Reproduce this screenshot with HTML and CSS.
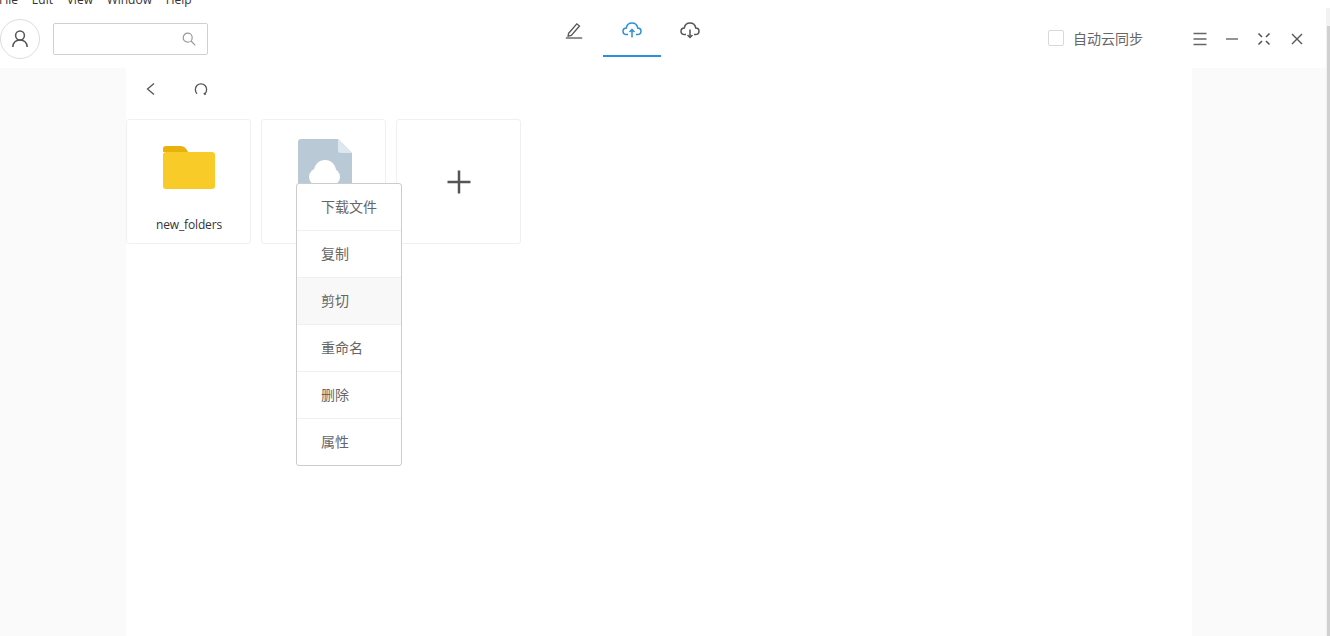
FILE: index.html
```html
<!DOCTYPE html>
<html lang="zh-CN">
<head>
<meta charset="utf-8">
<title>云同步</title>
<link rel="stylesheet" href="styles.css">
</head>
<body>
<div class="app">
  <nav class="menubar">
    <span>File</span><span>Edit</span><span>View</span><span>Window</span><span>Help</span>
  </nav>
  <header class="header">
    <div class="head-left">
      <div class="avatar">
        <svg width="20" height="20" viewBox="0 0 20 20" fill="none" stroke="#555" stroke-width="1.5"><circle cx="10" cy="6.500" r="4.400"/><path d="M2.800 18c.4-4.500 3-7 7.200-7s6.800 2.500 7.200 7"/></svg>
      </div>
      <div class="search">
        <svg width="14" height="14" viewBox="0 0 14 14" fill="none" stroke="#999" stroke-width="1.200"><circle cx="5.700" cy="5.700" r="4.500"/><path d="M9 9l4.300 4.300"/></svg>
      </div>
    </div>
    <div class="tabs">
      <div class="tab">
        <svg width="18" height="18" viewBox="0 0 18 18" fill="none" stroke="#555" stroke-width="1.300"><path d="M3.500 12.500L11.800 2.800l2.700 2.200-8.200 9.400-3.200.8z"/><path d="M.8 17h16.400"/></svg>
      </div>
      <div class="tab tab-active">
        <svg width="20" height="18" viewBox="0 0 20 18" fill="none" stroke="#2b8fdc" stroke-width="1.500"><path d="M6 13.500H4.700C2.500 13.500 1 12 1 10.200c0-1.900 1.500-3.300 3.300-3.300C4.800 4 7 2 10 2s5.200 2 5.700 4.900c1.800 0 3.300 1.400 3.300 3.300 0 1.800-1.500 3.300-3.700 3.300H14"/><path d="M10 16.500V8.500M7.500 11L10 8.500l2.500 2.500"/></svg>
      </div>
      <div class="tab">
        <svg width="20" height="18" viewBox="0 0 20 18" fill="none" stroke="#555" stroke-width="1.500"><path d="M6 13.500H4.700C2.500 13.500 1 12 1 10.200c0-1.900 1.500-3.300 3.300-3.300C4.800 4 7 2 10 2s5.200 2 5.700 4.900c1.800 0 3.300 1.400 3.300 3.300 0 1.800-1.500 3.300-3.700 3.300H14"/><path d="M10 8.500v8M7.500 14l2.500 2.500 2.500-2.500"/></svg>
      </div>
    </div>
    <div class="head-right">
      <label class="sync"><span class="checkbox"></span><span>自动云同步</span></label>
      <div class="win-buttons">
        <svg width="16" height="16" viewBox="0 0 16 16" stroke="#666" stroke-width="1.400" fill="none"><path d="M1.500 2.500h13M1.500 8h13M1.500 13.500h13"/></svg>
        <svg width="16" height="16" viewBox="0 0 16 16" stroke="#666" stroke-width="1.400" fill="none"><path d="M2 8h12"/></svg>
        <svg width="16" height="16" viewBox="0 0 16 16" stroke="#555" stroke-width="1.600" fill="none"><path d="M2.500 2.500l3.500 3.500M13.500 2.500L10 6M2.500 13.500L6 10M13.500 13.500L10 10"/></svg>
        <svg class="win-close" width="16" height="16" viewBox="0 0 16 16" stroke="#555" stroke-width="1.400" fill="none"><path d="M3 3l10 10M13 3L3 13"/></svg>
      </div>
    </div>
  </header>
  <div class="body">
    <aside class="side"></aside>
    <main class="main">
      <div class="toolbar">
        <svg width="12" height="14" viewBox="0 0 12 14" fill="none" stroke="#555" stroke-width="1.300"><path d="M10 1.500L3.500 7l6.500 5.500"/></svg>
        <svg width="14" height="14" viewBox="0 0 14 14" fill="none" stroke="#555" stroke-width="1.300"><path d="M3 11.800C.8 9.500.9 5.700 2.900 3.500 5 1.300 9 1.300 11.100 3.500c2 2.200 2.100 6 -.1 8.300"/><path d="M10 11l1.500 1.800" stroke-width="1.700"/></svg>
      </div>
      <div class="cards">
        <div class="card">
          <svg class="folder" width="52" height="43" viewBox="0 0 52 43"><path d="M0 3a3 3 0 0 1 3-3h14c4 0 6 2 8 6H0z" fill="#e8b10e"/><rect y="6" width="52" height="37" rx="3" fill="#f9cb28"/></svg>
          <div class="card-name">new_folders</div>
        </div>
        <div class="card">
          <svg class="file" width="54" height="66" viewBox="0 0 54 66"><path d="M3 0h37l14 14v49a3 3 0 0 1-3 3H3a3 3 0 0 1-3-3V3a3 3 0 0 1 3-3z" fill="#b9cad6"/><path d="M40 0l14 14H43a3 3 0 0 1-3-3z" fill="#dde7f0"/><circle cx="27" cy="32" r="11" fill="#fff"/><circle cx="20" cy="38" r="9" fill="#fff"/><circle cx="33" cy="38" r="9" fill="#fff"/><rect x="20" y="36" width="13" height="11" fill="#fff"/></svg>
        </div>
        <div class="card card-add">
          <svg width="26" height="26" viewBox="0 0 26 26" stroke="#555" stroke-width="2.500"><path d="M13 1.500v23M1.500 13h23"/></svg>
        </div>
      </div>
    </main>
    <aside class="side"></aside>
  </div>
  <ul class="context-menu">
    <li>下载文件</li>
    <li>复制</li>
    <li class="is-hover">剪切</li>
    <li>重命名</li>
    <li>删除</li>
    <li>属性</li>
  </ul>
  <div class="scrollbar"><div class="scrollbar-thumb"></div></div>
</div>
</body>
</html>
```

FILE: styles.css
```css
* { box-sizing: border-box; }
html, body { margin: 0; height: 100%; overflow: hidden; background: #fff; }
body { font-family: "Open Sans", "Noto Sans CJK SC", sans-serif; color: #555; }
.app { position: relative; width: 1330px; height: 636px; display: flex; flex-direction: column; }

.menubar { height: 8px; display: flex; gap: 13.7px; margin-left: -1px; font-size: 12px; line-height: 12px; color: #333; position: relative; top: -6px; }

.header { height: 60px; display: flex; flex: none; }
.head-left { width: 545px; display: flex; align-items: center; padding-top: 2px; }
.avatar { width: 40px; height: 40px; border: 1px solid #ddd; border-radius: 50%; display: flex; align-items: center; justify-content: center; }
.search { width: 155px; height: 32px; margin-left: 13px; border: 1px solid #d0d0d0; border-radius: 2px; display: flex; align-items: center; justify-content: flex-end; padding-right: 11px; }

.tabs { display: flex; height: 49px; }
.tab { width: 58px; display: flex; justify-content: center; padding-top: 13px; border-bottom: 2px solid transparent; }
.tab-active { border-bottom-color: #2b8fdc; }

.head-right { margin-left: auto; width: 282px; padding-right: 26px; display: flex; align-items: center; justify-content: space-between; padding-bottom: 1px; margin-top: 1px; }
.sync { display: flex; align-items: center; gap: 9px; font-size: 14px; color: #666; }
.checkbox { width: 16px; height: 16px; border: 1px solid #d9d9d9; border-radius: 2px; background: #fff; }
.win-buttons { display: flex; gap: 16px; margin-top: 2px; }
.win-close { margin-left: 1px; margin-right: -1px; }

.body { flex: 1; display: grid; grid-template-columns: 126px 1066px 1fr; min-height: 0; }
.side { background: #fafafa; }
.main { background: #fff; display: flex; flex-direction: column; }
.toolbar { height: 51px; display: flex; align-items: center; gap: 38px; padding: 0 0 10px 18px; }
.cards { display: flex; gap: 10px; }
.card { position: relative; width: 125px; height: 125px; border: 1px solid #f0f0f0; border-radius: 3px; display: flex; flex-direction: column; align-items: center; }
.folder { margin-top: 26px; margin-left: 1px; }
.card-name { margin-top: 27px; font-size: 12px; line-height: 17px; letter-spacing: -.15px; color: #333; margin-left: 1px; }
.file { margin-top: 19px; margin-left: 2px; }
.card-add { justify-content: center; }

.context-menu { position: absolute; left: 296px; top: 183px; width: 106px; margin: 0; padding: 0; list-style: none; background: #fff; border: 1px solid #ccc; border-radius: 3px; font-size: 14px; color: #666; }
.context-menu li { height: 47px; display: flex; align-items: center; padding: 0 0 2px 24px; border-bottom: 1px solid #f0f0f0; }
.context-menu li:last-child { border-bottom: 0; height: 46px; }
.context-menu .is-hover { background: #f8f8f8; }

.scrollbar { position: absolute; right: 0; top: 8px; bottom: 0; width: 4px; padding: 18px 0 0 1px; background: #f2f2f2; }
.scrollbar-thumb { height: 100%; background: #d0d0d0; }
```
